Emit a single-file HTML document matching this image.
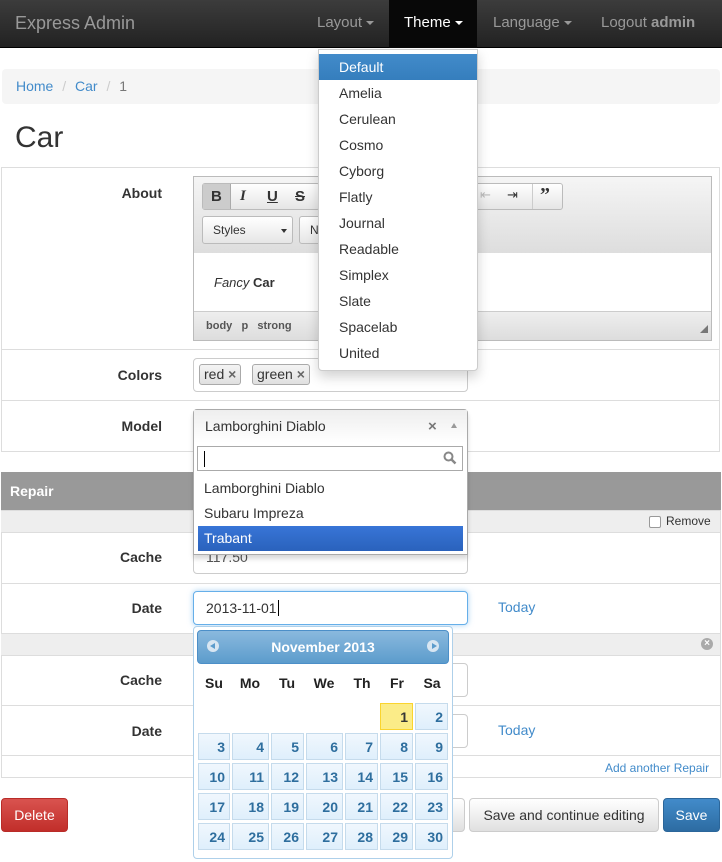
<!DOCTYPE html>
<html><head><meta charset="utf-8"><style>
*{box-sizing:border-box;margin:0;padding:0}
body{width:722px;height:862px;position:relative;overflow:hidden;background:#fff;font-family:"Liberation Sans",sans-serif;font-size:14px;color:#333}
.a{position:absolute}
.nav{left:0;top:0;width:722px;height:48px;background:linear-gradient(#3c3c3c,#222);border-bottom:1px solid #000}
.nv{top:0;height:48px;line-height:46px;color:#999;font-size:15px}
.car{border-top:4px solid;border-left:4px solid transparent;border-right:4px solid transparent;display:inline-block;vertical-align:middle;margin-left:4px}
.lbl{font-weight:bold;text-align:right;width:162px;left:0;font-size:14px}
.inp{background:#fff;border:1px solid #ccc;border-radius:4px}
.row{left:1px;width:719px;border-top:1px solid #ddd}
.dd a{display:block;height:26px;line-height:26px;padding-left:20px;color:#333}
.tb{background:linear-gradient(#fff,#e6e6e6);border:1px solid #bbb;border-radius:3px}
.cell{width:33px;height:27px;background:linear-gradient(#f0f7fd,#dfeffc);border:1px solid #c5dbec;color:#2e6e9e;font-weight:bold;text-align:right;padding-right:4px;line-height:26px;font-size:14px}
.dn{top:675px;font-weight:bold;font-size:14px;color:#222;text-align:center;width:34px}
.btn{top:798px;height:34px;border-radius:4px;line-height:32px;text-align:center;font-size:14px}
.sub{left:1px;width:719px;height:22px;background:#eee;border-top:1px solid #ddd}
</style></head><body>
<div class="a nav"></div>
<div class="a nv" style="left:15px;font-size:18px;color:#999">Express Admin</div>
<div class="a nv" style="left:317px">Layout<span class="car"></span></div>
<div class="a" style="left:389px;top:0;width:88px;height:48px;background:#080808"></div>
<div class="a nv" style="left:404px;color:#fff">Theme<span class="car"></span></div>
<div class="a nv" style="left:493px">Language<span class="car"></span></div>
<div class="a nv" style="left:601px">Logout <b>admin</b></div>

<div class="a" style="left:2px;top:69px;width:718px;height:35px;background:#f5f5f5;border-radius:4px;line-height:34px;padding-left:14px;font-size:14px"><span style="color:#428bca">Home</span> <span style="color:#ccc;padding:0 5px">/</span> <span style="color:#428bca">Car</span> <span style="color:#ccc;padding:0 5px">/</span> <span style="color:#777">1</span></div>
<div class="a" style="left:15px;top:121px;font-size:30px;color:#333">Car</div>

<div class="a" style="left:1px;top:167px;width:719px;height:285px;border:1px solid #ddd;border-top:1px solid #ddd"></div>
<div class="a row" style="top:349px"></div>
<div class="a row" style="top:400px"></div>
<div class="a lbl" style="top:185px">About</div>
<div class="a lbl" style="top:367px">Colors</div>
<div class="a lbl" style="top:418px">Model</div>

<!-- editor -->
<div class="a" style="left:193px;top:176px;width:519px;height:165px;border:1px solid #bbb;background:linear-gradient(#f5f5f5,#ddd 77px,#fff 77px)"></div>
<div class="a" style="left:194px;top:253px;width:517px;height:58px;background:#fff"></div>
<div class="a" style="left:194px;top:311px;width:517px;height:29px;background:linear-gradient(#eee,#ddd);border-top:1px solid #ccc;font-size:11px;font-weight:bold;color:#555;line-height:28px;padding-left:12px">body &nbsp; p &nbsp; strong</div>
<div class="a" style="left:700px;top:325px;width:0;height:0;border-left:8px solid transparent;border-bottom:8px solid #777"></div>
<div class="a tb" style="left:202px;top:183px;width:118px;height:27px"></div>
<div class="a" style="left:203px;top:184px;width:28px;height:25px;background:#ccc;border-right:1px solid #aaa"></div>
<div class="a" style="left:211px;top:188px;font-weight:bold;font-size:15px">B</div>
<div class="a" style="left:240px;top:188px;font-style:italic;font-weight:bold;font-size:15px;font-family:'Liberation Serif',serif">I</div>
<div class="a" style="left:267px;top:188px;text-decoration:underline;font-weight:bold;font-size:15px">U</div>
<div class="a" style="left:295px;top:188px;text-decoration:line-through;font-weight:bold;font-size:15px">S</div>
<div class="a tb" style="left:440px;top:183px;width:123px;height:27px"></div>
<div class="a" style="left:480px;top:187px;color:#bbb;font-size:13px">⇤</div>
<div class="a" style="left:507px;top:187px;color:#333;font-size:13px">⇥</div>
<div class="a" style="left:532px;top:184px;width:1px;height:25px;background:#ccc"></div>
<div class="a" style="left:540px;top:184px;font-weight:bold;font-size:20px;font-family:'Liberation Serif',serif">”</div>
<div class="a tb" style="left:202px;top:216px;width:91px;height:28px;font-size:12px;line-height:26px;padding-left:10px;color:#333">Styles<span class="a" style="left:78px;top:12px;border-top:4px solid #333;border-left:3px solid transparent;border-right:3px solid transparent"></span></div>
<div class="a tb" style="left:299px;top:216px;width:40px;height:28px;font-size:12px;line-height:26px;padding-left:10px">N</div>
<div class="a" style="left:214px;top:275px;font-size:13px"><i>Fancy</i> <b>Car</b></div>

<!-- colors -->
<div class="a inp" style="left:193px;top:358px;width:275px;height:34px"></div>
<div class="a" style="left:199px;top:364px;height:21px;padding:0 4px;border:1px solid #aaa;border-radius:3px;background:linear-gradient(#f4f4f4,#e0e0e0);font-size:14px;line-height:19px">red <span style="color:#666;font-weight:bold">×</span></div>
<div class="a" style="left:252px;top:364px;height:21px;padding:0 4px;border:1px solid #aaa;border-radius:3px;background:linear-gradient(#f4f4f4,#e0e0e0);font-size:14px;line-height:19px">green <span style="color:#666;font-weight:bold">×</span></div>

<!-- repair -->
<div class="a" style="left:1px;top:472px;width:720px;height:306px;border:1px solid #ddd"></div>
<div class="a" style="left:1px;top:472px;width:720px;height:38px;background:#999;color:#fff;font-weight:bold;line-height:38px;padding-left:9px">Repair</div>
<div class="a sub" style="top:510px"></div>
<div class="a" style="left:649px;top:516px;width:12px;height:12px;border:1px solid #999;border-radius:2px;background:#fff"></div>
<div class="a" style="left:666px;top:514px;font-size:12px">Remove</div>
<div class="a row" style="top:532px"></div>
<div class="a row" style="top:583px"></div>
<div class="a sub" style="top:633px"></div>
<div class="a" style="left:701px;top:638px;width:12px;height:12px;border-radius:6px;background:#aaa;color:#fff;font-size:10px;line-height:12px;text-align:center;font-weight:bold">×</div>
<div class="a row" style="top:655px"></div>
<div class="a row" style="top:705px"></div>
<div class="a row" style="top:755px"></div>
<div class="a" style="left:605px;top:761px;font-size:12px;color:#428bca">Add another Repair</div>
<div class="a lbl" style="top:549px">Cache</div>
<div class="a lbl" style="top:600px">Date</div>
<div class="a lbl" style="top:672px">Cache</div>
<div class="a lbl" style="top:723px">Date</div>
<div class="a inp" style="left:193px;top:540px;width:275px;height:34px;padding-left:12px;line-height:32px;color:#555">117.50</div>
<div class="a inp" style="left:193px;top:591px;width:275px;height:34px;border-color:#66afe9;box-shadow:0 0 6px rgba(102,175,233,.6);padding-left:12px;line-height:32px;color:#333">2013-11-01<span style="border-left:1px solid #000;margin-left:1px"></span></div>
<div class="a" style="left:498px;top:599px;color:#428bca">Today</div>
<div class="a inp" style="left:193px;top:663px;width:275px;height:34px"></div>
<div class="a inp" style="left:193px;top:714px;width:275px;height:34px"></div>
<div class="a" style="left:498px;top:722px;color:#428bca">Today</div>

<!-- buttons -->
<div class="a btn" style="left:1px;width:67px;background:linear-gradient(#d9534f,#c12e2a);border:1px solid #b92c28;color:#fff">Delete</div>
<div class="a btn" style="left:400px;width:65px;background:linear-gradient(#fff,#e0e0e0);border:1px solid #ccc"></div>
<div class="a btn" style="left:469px;width:190px;background:linear-gradient(#fff,#e0e0e0);border:1px solid #ccc;color:#333">Save and continue editing</div>
<div class="a btn" style="left:663px;width:57px;background:linear-gradient(#428bca,#2d6ca2);border:1px solid #2b669a;color:#fff">Save</div>

<!-- select2 dropdown -->
<div class="a" style="left:193px;top:409px;width:275px;height:146px;background:#fff;border:1px solid #aaa;border-radius:4px 4px 0 0;box-shadow:0 4px 5px rgba(0,0,0,.15)"></div>
<div class="a" style="left:194px;top:410px;width:273px;height:33px;background:linear-gradient(#eee,#fff);padding-left:11px;line-height:32px;font-size:14px">Lamborghini Diablo</div>
<div class="a" style="left:428px;top:418px;font-weight:bold;color:#777;font-size:15px">×</div>
<div class="a" style="left:451px;top:423px;border-bottom:5px solid #999;border-left:3px solid transparent;border-right:3px solid transparent"></div>
<div class="a" style="left:197px;top:446px;width:266px;height:25px;border:1px solid #aaa"></div>
<div class="a" style="left:204px;top:451px;width:1px;height:16px;background:#000"></div>
<svg class="a" style="left:443px;top:451px" width="14" height="14"><circle cx="5.5" cy="5.5" r="4" fill="none" stroke="#888" stroke-width="2"/><line x1="8.5" y1="8.5" x2="12.5" y2="12.5" stroke="#888" stroke-width="2.5"/></svg>
<div class="a" style="left:204px;top:480px">Lamborghini Diablo</div>
<div class="a" style="left:204px;top:505px">Subaru Impreza</div>
<div class="a" style="left:198px;top:526px;width:265px;height:25px;background:linear-gradient(#3875d7,#2a62bc);color:#fff;padding-left:6px;line-height:24px">Trabant</div>

<!-- calendar -->
<div class="a" style="left:193px;top:626px;width:260px;height:233px;background:#fff;border:1px solid #aed0ea;border-radius:4px"></div>
<div class="a" style="left:197px;top:630px;width:252px;height:34px;background:linear-gradient(#8ab9de,#5c9ccc);border:1px solid #4c8fc8;border-radius:4px;color:#fff;font-weight:bold;font-size:14px;text-align:center;line-height:32px">November 2013</div>
<div class="a" style="left:207px;top:640px;width:12px;height:12px;border-radius:6px;background:#d8e6f2;"></div>
<div class="a" style="left:210px;top:643px;border-right:5px solid #5c9ccc;border-top:3px solid transparent;border-bottom:3px solid transparent"></div>
<div class="a" style="left:427px;top:640px;width:12px;height:12px;border-radius:6px;background:#d8e6f2;"></div>
<div class="a" style="left:432px;top:643px;border-left:5px solid #5c9ccc;border-top:3px solid transparent;border-bottom:3px solid transparent"></div>
<div class="a dn" style="left:197px">Su</div><div class="a dn" style="left:233px">Mo</div><div class="a dn" style="left:270px">Tu</div><div class="a dn" style="left:307px">We</div><div class="a dn" style="left:345px">Th</div><div class="a dn" style="left:380px">Fr</div><div class="a dn" style="left:415px">Sa</div>

<div class="a cell" style="left:380px;top:703px;background:#fbec88;border-color:#fad42e;color:#363636">1</div>
<div class="a cell" style="left:415px;top:703px">2</div>

<div class="a cell" style="left:198px;top:733px;width:32px">3</div><div class="a cell" style="left:232px;top:733px;width:37px">4</div><div class="a cell" style="left:271px;top:733px">5</div><div class="a cell" style="left:306px;top:733px;width:37px">6</div><div class="a cell" style="left:345px;top:733px">7</div><div class="a cell" style="left:380px;top:733px">8</div><div class="a cell" style="left:415px;top:733px">9</div>
<div class="a cell" style="left:198px;top:763px;width:32px">10</div><div class="a cell" style="left:232px;top:763px;width:37px">11</div><div class="a cell" style="left:271px;top:763px">12</div><div class="a cell" style="left:306px;top:763px;width:37px">13</div><div class="a cell" style="left:345px;top:763px">14</div><div class="a cell" style="left:380px;top:763px">15</div><div class="a cell" style="left:415px;top:763px">16</div>
<div class="a cell" style="left:198px;top:793px;width:32px">17</div><div class="a cell" style="left:232px;top:793px;width:37px">18</div><div class="a cell" style="left:271px;top:793px">19</div><div class="a cell" style="left:306px;top:793px;width:37px">20</div><div class="a cell" style="left:345px;top:793px">21</div><div class="a cell" style="left:380px;top:793px">22</div><div class="a cell" style="left:415px;top:793px">23</div>
<div class="a cell" style="left:198px;top:823px;width:32px">24</div><div class="a cell" style="left:232px;top:823px;width:37px">25</div><div class="a cell" style="left:271px;top:823px">26</div><div class="a cell" style="left:306px;top:823px;width:37px">27</div><div class="a cell" style="left:345px;top:823px">28</div><div class="a cell" style="left:380px;top:823px">29</div><div class="a cell" style="left:415px;top:823px">30</div>

<!-- theme dropdown -->
<div class="a dd" style="left:318px;top:49px;width:160px;height:322px;background:#fff;border:1px solid #ccc;border-radius:0 0 4px 4px;box-shadow:0 6px 12px rgba(0,0,0,.175);padding-top:4px;font-size:14px">
<a style="background:#428bca;background:linear-gradient(#428bca,#357ebd);color:#fff">Default</a><a>Amelia</a><a>Cerulean</a><a>Cosmo</a><a>Cyborg</a><a>Flatly</a><a>Journal</a><a>Readable</a><a>Simplex</a><a>Slate</a><a>Spacelab</a><a>United</a>
</div>
</body></html>
